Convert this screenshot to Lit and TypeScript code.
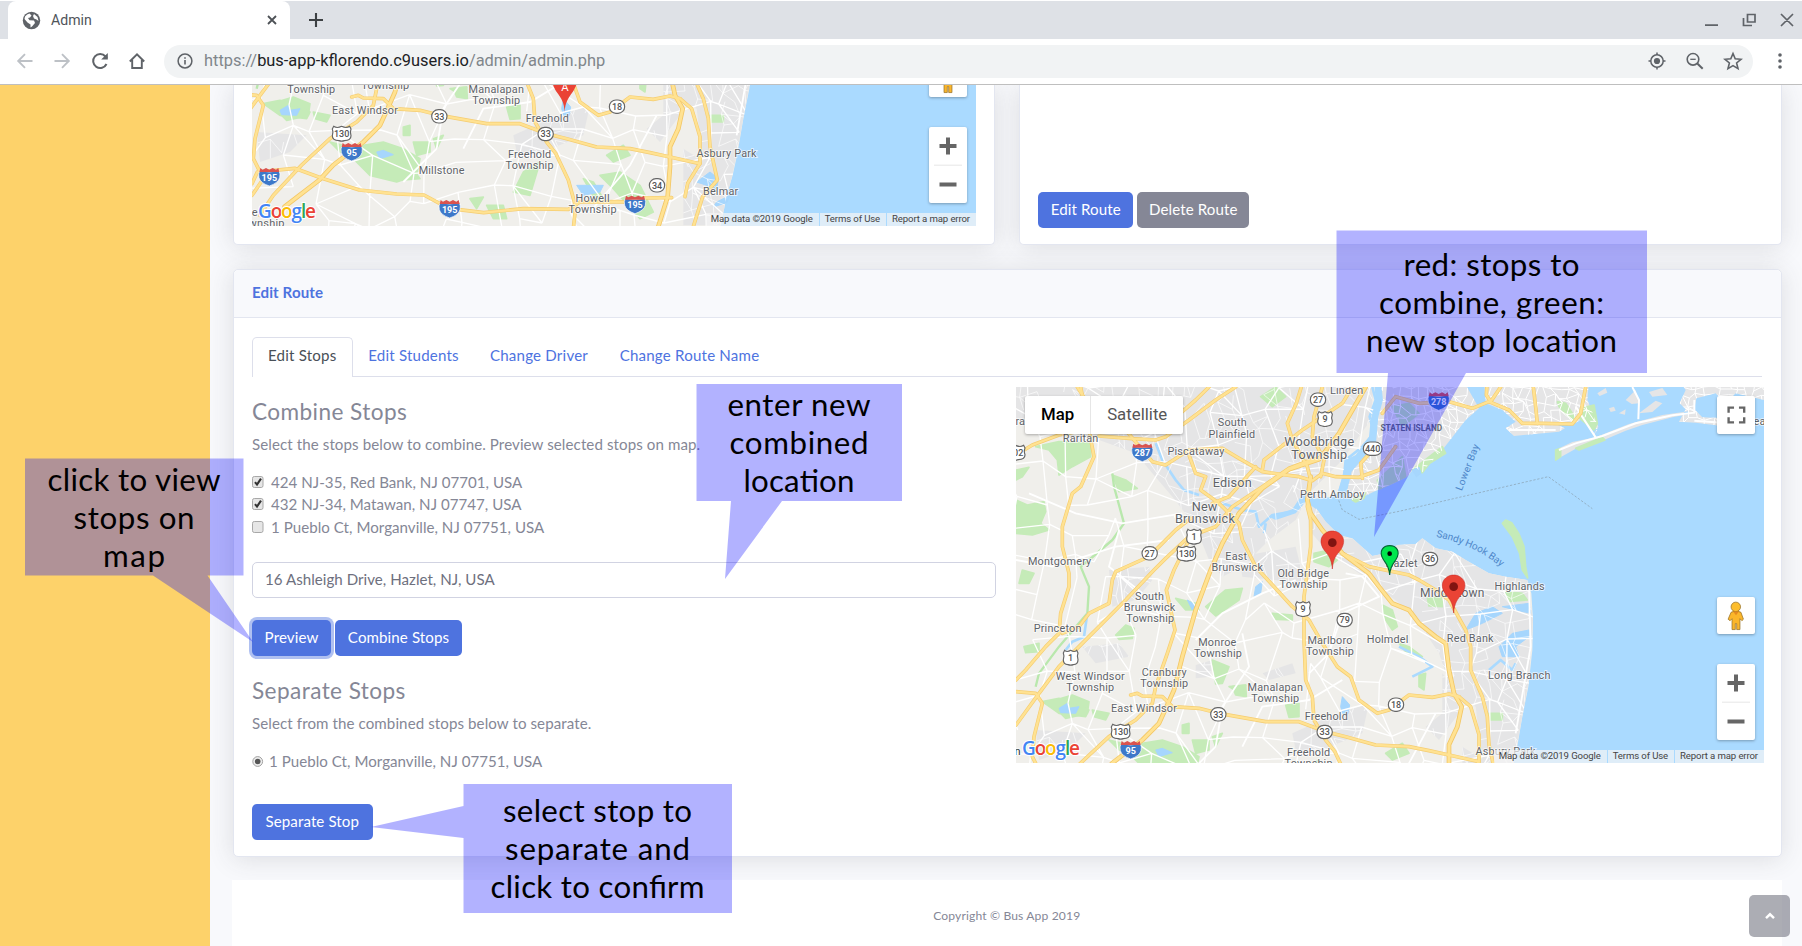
import { LitElement, html, svg, css } from "lit";
import { customElement, property } from "lit/decorators.js";

/* ---------- geography (units: one third of a pixel) ---------- */
const NJ =
  "M0 0H1095L1100 60L1085 120L1080 170L1040 225L1010 240L1000 290L985 340L960 352L905 358L925 390L950 425L975 450L1000 468L1030 475L1060 502L1090 528L1130 520L1165 495L1220 492L1240 475L1280 505L1330 515L1370 540L1440 580L1490 590L1555 600L1567 640L1572 720L1570 810L1558 920L1540 1010L1522 1115L1508 1180L1492 1234L1470 1340H0Z";
const STATEN =
  "M1115 0H1362L1410 85L1370 120L1300 210L1262 250L1240 277L1218 262L1195 290L1150 312L1110 328L1060 352L1030 360L1015 330L1028 275L1062 235L1100 200L1108 110L1122 60Z";
const BROOKLYN =
  "M1425 0L1430 70L1480 90L1520 125L1490 145L1515 168L1650 155L1668 145L1640 132L1700 128L1732 110L1765 150L1750 170L1762 150L1768 140L1735 60L1740 0Z";
const ROCKAWAY =
  "M1640 240L1640 210L1690 186L1760 172L1860 132L1960 105L2040 94L2040 102L1990 112L1900 135L1850 152L1790 178L1700 206Z";
const LONGBEACH = "M2010 0L2030 30L2012 70L2030 88L2010 125L2060 128L2140 138L2265 132V126L2180 116L2080 112L2056 88L2062 55L2120 40L2150 70L2180 40L2265 60V0Z";
const ISLANDS =
  "M1765 40L1790 24L1795 38L1772 48ZM1850 60L1880 30L1890 70L1868 72ZM1890 100L1940 62L1960 70L1930 96ZM1830 100L1850 88L1848 104ZM1920 36L1960 24L1975 45L1930 50ZM1800 85L1815 80L1820 92L1805 96Z";

const URBAN = [
  "M0 0H1095L1085 120L1000 240L900 340L860 420L780 480L700 560L640 590L600 540L560 440L490 350L430 280L380 220L270 180L200 100L0 120Z",
  "M895 360L1020 475L1160 495L1240 475L1340 520L1555 600L1572 720L1560 900L1520 1120L1480 1300H1380L1420 1150L1400 980L1330 940L1290 820L1210 700L1080 600L960 520L900 450Z",
  "M300 570L420 560L430 600L380 660L310 680Z",
  "M560 855L610 840L605 890L560 895Z",
  "M1300 880L1340 930L1350 1000L1290 1080L1250 1040L1300 1000Z",
  "M80 1050L230 1060L180 1110L90 1140Z",
  "M850 1060L960 1010L1080 970L1060 1060L940 1110L860 1110Z",
  "M220 800L330 790L360 830L260 850Z",
  "M690 530L860 500L890 620L800 600L700 590Z",
  "M760 880L850 850L860 880L780 900Z",
  "M1360 1100L1440 1150L1480 1330H1360Z",
];
const PARKS = [
  "M21 360L55 375L105 365L110 395L95 430L120 450L70 465L21 460Z",
  "M80 200L150 185L245 190L245 230L190 260L150 285L145 240L120 210Z",
  "M21 270L60 262L40 290L21 300Z",
  "M310 285L350 300L385 325L330 335Z",
  "M755 50L800 21L830 50L790 80Z",
  "M590 680L650 630L700 625L690 660L620 708Z",
  "M500 655L560 670L570 690L530 690Z",
  "M790 700L850 705L850 720L800 718Z",
  "M610 840L660 860L640 910L620 912Z",
  "M140 960L190 945L240 965L235 1000L170 1015L145 990Z",
  "M250 990L300 1000L290 1020L255 1010Z",
  "M320 765L350 735L375 745L370 775L330 778Z",
  "M670 920L710 915L712 950L680 945Z",
  "M830 975L870 970L870 1010L840 1012Z",
  "M370 1130L400 1090L460 1080L520 1100L570 1130L560 1180L500 1200L420 1180Z",
  "M550 1080L600 1080L600 1110L560 1120Z",
  "M610 1070L640 1060L620 1100Z",
  "M1120 675L1150 690L1165 740L1150 750L1130 720Z",
  "M1170 790L1200 800L1240 830L1220 830L1190 815Z",
  "M1230 885L1250 880L1245 930L1230 920Z",
  "M1130 1120L1180 1090L1200 1120L1150 1140Z",
  "M1030 360L1070 335L1065 355L1040 366Z",
  "M1255 655L1300 648L1300 680L1260 678Z",
  "M1490 635L1540 640L1555 660L1500 664Z",
  "M1210 270L1235 250L1300 200L1310 220L1262 250L1240 278Z",
  "M1715 85L1755 75L1765 130L1755 150L1712 115Z",
  "M1645 65L1670 70L1700 115L1690 122L1650 80Z",
  "M1480 430L1490 420L1508 428L1530 462L1545 500L1550 560L1556 594L1540 570L1532 520L1510 470Z",
  "M1640 240L1640 210L1655 205L1655 230ZM1700 205L1780 172L1788 180L1710 210Z",
  "M1105 300L1150 260L1180 230L1190 290L1110 328Z",
  "M1150 80L1200 70L1230 100L1180 140Z",
  "M1110 1180L1170 1170L1230 1210L1270 1290L1230 1310L1150 1220Z",
  "M420 1110L480 1130L540 1150L570 1190L500 1195L430 1150Z",
  "M880 1170L930 1140L900 1240L850 1230Z",
  "M1060 1190L1090 1200L1120 1250L1100 1260Z",
  "M720 1250L760 1245L740 1280Z",
  "M770 1270L820 1270L830 1310L790 1310Z",
  "M100 965L150 955L240 990L230 1010L150 1000Z",
  "M660 920L710 915L700 945Z",
  "M520 1035L540 1030L540 1060L520 1060Z",
  "M915 520L960 510L985 540L960 560L915 545Z",
  "M1440 1000L1480 1000L1480 1020L1445 1020Z",
  "M40 570L75 580L60 610L30 610Z",
  "M45 800L90 790L90 815L50 818Z",
  "M300 1080L340 1090L380 1120L330 1110Z",
];
const LAKES = [
  "M150 985L175 970L180 985L210 980L200 1000L155 998Z",
  "M440 1110L460 1105L490 1118L450 1130Z",
  "M740 620L760 605L755 640L735 650Z",
  "M535 660L560 675L550 690Z",
  "M1370 750L1400 700L1450 680L1480 700L1420 730Z",
  "M1470 800L1510 760L1560 750L1560 770L1520 800L1530 830L1480 830Z",
  "M1480 680L1560 670L1565 700L1520 690Z",
  "M1040 1210L1120 1210L1110 1230L1060 1240Z",
  "M1400 1200L1440 1170L1465 1190L1460 1220Z",
  "M1460 1260L1500 1240L1490 1262L1450 1275Z",
  "M1000 950L1022 975L1018 1000L1002 1004L995 980Z",
  "M1210 270L1230 262L1236 280L1222 290Z",
];
const RIVERS = [
  "M440 190L460 240L500 300L525 330L570 345",
  "M640 370L700 390L740 395L750 440L790 405L850 395L880 350L920 350",
  "M770 430L765 460",
  "M235 700L225 770L190 785L170 810",
  "M1090 21L1100 60L1082 110L1095 160L1060 200L1010 240L1005 290L990 340",
  "M1170 800L1230 830L1270 860L1210 890",
  "M1440 870L1475 840L1510 870L1520 850",
];
const YELLOW = [
  "M21 225L70 195L150 165L230 150M270 168L370 176L440 180L470 170L540 120L620 60L680 21",
  "M520 95L560 60L600 21",
  "M205 21L230 60L260 100L350 150L400 210L430 245L470 255L540 210L640 205L690 235L760 275L830 285L870 290L910 302L940 280L980 290L1050 292L1110 270L1160 200",
  "M215 21L240 150L255 230L215 320L190 340L160 440L160 500L180 580L180 620L155 700L150 760L110 800L50 870L21 900",
  "M160 760L210 740L240 700L300 670L310 600L320 575L420 530L500 450L545 415",
  "M21 1035L90 940L150 860L210 800L350 660L435 570L470 535L540 470L620 440L670 380L760 320L840 265L905 240L950 230",
  "M540 225L560 280L590 290L575 330L630 370L660 400L690 430L700 480L740 560L850 680L900 720L940 790L985 860L1025 890L1050 960L1105 1000L1140 990L1200 945L1270 952L1320 942L1350 950",
  "M905 290L895 380L905 420L905 500L885 650L885 780L890 900L910 950L915 1020L950 1080L977 1114L1015 1194L1037 1274L1030 1340",
  "M1000 520L1080 560L1200 585L1230 600L1280 630L1320 660L1370 750L1385 800L1385 870L1420 950L1435 1010L1440 1094L1462 1194L1418 1244L1388 1340",
  "M1350 950L1385 980L1410 1064L1410 1144L1373 1204L1365 1244",
  "M365 945L385 940L400 948L460 950L490 980L570 985L630 1000L770 1025L870 1025L950 1055L1010 1070L1100 1095L1200 1100L1260 1112L1320 1125L1410 1145",
  "M89 1300L130 1240L215 1149L300 1070L380 1020L430 970L440 920L475 820L498 750L472 630L495 570L545 470",
  "M21 935L80 940L100 970L75 1070L70 1130L100 1190L66 1240",
  "M66 1205L82 1170L194 1159L280 1190L388 1224L500 1236L582 1239L656 1279L761 1292L880 1280L1015 1282L1050 1260L1164 1259L1215 1262L1240 1248L1325 1247",
  "M877 21L862 70L835 130L850 180L895 260L905 300",
  "M940 21L915 110L910 170L945 240L935 290",
  "M760 270L765 240L880 150L1000 70L1030 21",
  "M1060 295L1055 250L1100 200",
  "M610 370L660 350L740 260",
  "M1120 100L1160 50L1230 70L1320 65L1390 85L1440 65L1500 90L1540 130L1600 130L1690 132L1715 100L1730 21",
  "M1435 0L1432 45L1445 65L1475 21M1573 21L1580 80L1585 130",
];
const TURNPIKE = [
  "M164 1274L268 1194L310 1149L400 1080L450 1030L475 975L495 930L520 830L560 690L605 570L640 490L690 400L760 325L840 268L930 238L990 160L1070 21",
  "M905 290L895 360L905 400L940 450L1000 520L1040 550L1080 580L1110 620L1150 670L1200 690L1230 730L1280 770L1310 790L1320 870L1335 940L1358 980L1345 1040L1320 1094L1320 1154L1313 1244L1283 1340",
];
const WHITE = [
  "M21 540L130 560L320 500L480 480",
  "M60 340L200 400L340 430L520 400",
  "M330 450L300 560L400 640",
  "M1010 580L1060 590L1110 650L1000 700L960 820L900 880",
  "M700 760L720 860L640 980L620 1100L520 1200",
  "M860 600L760 640L640 700L560 780",
  "M1000 900L900 960L760 980L700 1100",
  "M1560 620L1565 800L1520 1060",
  "M1280 1000L1200 1150L1080 1290",
];

function rnd(a: number, b: number, c = 0): number {
  const v = Math.sin(a * 127.1 + b * 311.7 + c * 74.7) * 43758.5453;
  return v - Math.floor(v);
}
/* Local street mesh: a jittered lattice with some of its edges left out. */
function mesh(step: number, keep: number, seed: number, w = 2280, h = 1350): string {
  const pt = (i: number, j: number) =>
    `${Math.round((i + (rnd(i, j, seed) - 0.5) * 0.8) * step)} ${Math.round((j + (rnd(i, j, seed + 1) - 0.5) * 0.8) * step)}`;
  let d = "";
  for (let i = 0; i < w / step; i++)
    for (let j = 0; j < h / step; j++) {
      if (rnd(i, j, seed + 2) < keep) d += `M${pt(i, j)}L${pt(i + 1, j)}`;
      if (rnd(i, j, seed + 3) < keep) d += `M${pt(i, j)}L${pt(i, j + 1)}`;
      if (rnd(i, j, seed + 4) < keep * 0.22) d += `M${pt(i, j)}L${pt(i + 1, j + 1)}`;
    }
  return d;
}
const COARSE = mesh(88, 0.74, 3);
const FINE = mesh(40, 0.56, 9);
const STREETS = mesh(24, 0.85, 17);

type Label = [string, number, number, number?];
const LABELS: Label[] = [
  ["Linden", 1013, 41], ["South", 670, 139], ["Plainfield", 669, 173], ["Raritan", 215, 185],
  ["Piscataway", 561, 224], ["Woodbridge", 931, 199, 38], ["Township", 931, 237, 38],
  ["Edison", 670, 321, 38], ["Perth Amboy", 970, 353], ["New", 587, 392, 38],
  ["Brunswick", 588, 430, 38], ["Montgomery", 152, 554], ["East", 682, 540],
  ["Brunswick", 685, 574], ["Old Bridge", 883, 591], ["Township", 884, 625],
  ["South", 422, 659], ["Brunswick", 422, 693], ["Township", 424, 727],
  ["Princeton", 146, 757], ["Monroe", 625, 798], ["Township", 627, 831],
  ["Marlboro", 963, 792], ["Township", 963, 825], ["Holmdel", 1136, 790],
  ["West Windsor", 244, 899], ["Township", 244, 933], ["Cranbury", 466, 888],
  ["Township", 466, 922], ["Manalapan", 799, 933], ["Township", 799, 967],
  ["East Windsor", 405, 997], ["Freehold", 952, 1020], ["Freehold", 899, 1127],
  ["Township", 899, 1161], ["Hazlet", 1178, 561], ["Middletown", 1330, 651, 36],
  ["Highlands", 1532, 630], ["Red Bank", 1384, 786], ["Long Branch", 1531, 898],
  ["Asbury Park", 1490, 1126], ["Millstone", 635, 1177], ["Howell", 1088, 1259],
  ["Township", 1088, 1293], ["Belmar", 1472, 1239], ["ra", 34, 136],
];

function shield(kind: string, n: string, x: number, y: number) {
  if (kind === "i")
    return svg`<g transform="translate(${x} ${y})">
      <path d="M-29 -17Q0 -9 29 -17Q34 -8 31 4Q27 20 0 29Q-27 20 -31 4Q-34 -8 -29 -17Z" fill="#3d78c9" stroke="#fff" stroke-width="2"/>
      <path d="M-27 -25L-20 -20L-10 -25L0 -20L10 -25L20 -20L27 -25L30 -13H-30Z" fill="#d9534f"/>
      <text class="ish" y="13">${n}</text></g>`;
  const w = n.length > 2 ? 28 : n.length > 1 ? 23 : 22;
  return kind === "u"
    ? svg`<g transform="translate(${x} ${y})">
      <path d="M${-w + 4} -22Q${-w / 2} -15 0 -22Q${w / 2} -15 ${w - 4} -22L${w} -14Q${w - 4} -4 ${w} 6Q${w} 20 8 21Q0 24 -8 21Q${-w} 20 ${-w} 6Q${-w + 4} -4 ${-w} -14Z" fill="#fff" stroke="#666" stroke-width="3.5"/>
      <text class="sh" y="10">${n}</text></g>`
    : svg`<g transform="translate(${x} ${y})">
      <rect x=${-w} y="-20" width=${2 * w} height="40" rx="20" fill="#fff" stroke="#666" stroke-width="3.5"/>
      <text class="sh" y="10">${n}</text></g>`;
}
const SHIELDS: [string, string, number, number][] = [
  ["i", "287", 400, 216], ["i", "278", 1289, 62], ["s", "27", 927, 59], ["u", "9", 948, 117],
  ["s", "440", 1091, 206], ["u", "1", 555, 470], ["u", "130", 532, 521], ["s", "27", 422, 520],
  ["s", "36", 1263, 537], ["u", "9", 882, 687], ["s", "79", 1007, 720], ["u", "1", 185, 833],
  ["s", "33", 628, 1003], ["u", "130", 335, 1055], ["s", "18", 1161, 974], ["s", "33", 947, 1056],
  ["i", "95", 365, 1108], ["u", "202", 20, 218], ["i", "195", 118, 1183], ["i", "195", 659, 1279],
  ["i", "195", 1215, 1266], ["s", "34", 1281, 1210],
];

@customElement("street-map")
export class StreetMap extends LitElement {
  @property() view = "0 0 100 100";
  @property({ type: Boolean }) full = false;

  static styles = css`
    :host { display: block; position: relative; overflow: hidden; font-family: Roboto, sans-serif; letter-spacing: 0; }
    .canvas { display: block; width: 100%; height: 100%; }
    .lb { font: 400 33px Roboto, sans-serif; fill: #5f6368; stroke: #fff; stroke-width: 5; stroke-opacity: .75; paint-order: stroke; text-anchor: middle; letter-spacing: .6px; }
    .sh { font: 500 27px Roboto, sans-serif; fill: #555; text-anchor: middle; }
    .ish { font: 700 27px Roboto, sans-serif; fill: #fff; text-anchor: middle; }
    .water { font: 400 30px Roboto, sans-serif; fill: #4e86c9; text-anchor: middle; letter-spacing: 1px; }
    .boro { font: 700 25px Roboto, sans-serif; fill: #666d75; text-anchor: middle; }
    .pinA { font: 400 30px Roboto, sans-serif; fill: #fff; text-anchor: middle; }
    .logo { position: absolute; left: 6px; bottom: 1px; }
    .g { font: 600 19px/18px "Open Sans", sans-serif; paint-order: stroke; stroke: #fff; stroke-width: 2; }
    .attr { position: absolute; right: 0; bottom: 0; height: 13px; display: flex; font-size: 9.6px; line-height: 12px; color: #444; letter-spacing: -.12px; }
    .attr span { background: rgba(245,245,245,.7); padding: 0 6px 0 5px; margin-left: 1px; white-space: nowrap; }
    .panel { position: absolute; background: #fff; border-radius: 2px; box-shadow: 0 1px 3px rgba(0,0,0,.3); right: 9.5px; width: 37.5px; display: flex; flex-direction: column; align-items: center; }
    .zoom { bottom: 23px; height: 76px; }
    .peg { bottom: 129px; height: 37.5px; }
    .fs { top: 9px; height: 37.5px; }
    .types { position: absolute; left: 9px; top: 9px; height: 38px; display: flex; background: #fff; border-radius: 2px; box-shadow: 0 1px 3px rgba(0,0,0,.3); font-size: 16.8px; line-height: 37px; color: #565656; }
    .types span { padding: 0 16px; }
    .types .on { color: #000; font-weight: 500; border-right: 1px solid #e6e6e6; }
  `;

  render() {
    const [vx, vy, vw, vh] = this.view.split(" ").map(Number);
    const visible = (x: number, y: number, m: number) =>
      x > vx - m && x < vx + vw + m && y > vy - 3 && y < vy + vh + m;
    const pin = (x: number, y: number) => svg`<g transform="translate(${x} ${y})">
      <path d="M0 0C-2 -30 -12 -42 -24 -56C-48 -90 -24 -114 0 -114C24 -114 48 -90 24 -56C12 -42 2 -30 0 0Z" fill="#ea4335" stroke="#c5221f" stroke-width="1.5"/>
      <circle cy="-79" r="13" fill="#811411"/></g>`;
    return html`
      <svg class="canvas" viewBox=${this.view} preserveAspectRatio="none">
        <defs>
          <clipPath id="land"><path d=${NJ} /></clipPath>
          <clipPath id="urban"><path d=${URBAN.join("")} /></clipPath>
          <clipPath id="city"><path d=${STATEN + BROOKLYN + LONGBEACH} /></clipPath>
        </defs>
        <rect x="0" y="0" width="2400" height="1400" fill="#aadaff" />
        <path d=${NJ} fill="#f0efeb" />
        <g clip-path="url(#land)">
          ${URBAN.map((d) => svg`<path d=${d} fill="#e5e5e6"/>`)}
        </g>
        <path d=${STATEN + BROOKLYN + ROCKAWAY + LONGBEACH + ISLANDS} fill="#e5e5e6" />
        ${PARKS.map((d) => svg`<path d=${d} fill="#c5ebb8" stroke="#c5ebb8" stroke-width="5" stroke-linejoin="round"/>`)}
        <path d="M310 280L315 320L345 430L310 480L240 540L215 560L240 620L235 700L150 800L90 880L80 920" fill="none" stroke="#b9e8ad" stroke-width="7" stroke-linejoin="round" />
        ${RIVERS.map((d) => svg`<path d=${d} fill="none" stroke="#aadaff" stroke-width="8" stroke-linejoin="round"/>`)}
        <path d="M780 410L850 388L880 350L910 345L925 390L890 365L860 400L800 420Z" fill="#aadaff" />
        ${LAKES.map((d) => svg`<path d=${d} fill="#a6d6fd" stroke="#a6d6fd" stroke-width="3"/>`)}
        <g clip-path="url(#land)" fill="none" stroke="#fff">
          <path d=${COARSE} stroke-width="4" />
          ${WHITE.map((d) => svg`<path d=${d} stroke-width="5.5"/>`)}
          <g clip-path="url(#urban)"><path d=${FINE} stroke-width="2.3" stroke-opacity=".85" /></g>
        </g>
        <g clip-path="url(#city)"><path d=${STREETS} fill="none" stroke="#fff" stroke-width="3" /></g>
        <path d="M1650 210L1700 190L1780 168L1880 130L1990 106L2056 98V60M2056 122L2140 128H2265M1700 80L1760 172M1870 21L1890 60L1888 118M1500 150H1640" fill="none" stroke="#fff" stroke-width="6" />
        <g fill="none" stroke-linejoin="round" stroke-linecap="round">
          ${YELLOW.map((d) => svg`<path d=${d} stroke="#f5cd72" stroke-width="11"/>`)}
          ${TURNPIKE.map((d) => svg`<path d=${d} stroke="#f3c766" stroke-width="14"/>`)}
          ${YELLOW.map((d) => svg`<path d=${d} stroke="#ffe292" stroke-width="7"/>`)}
          ${TURNPIKE.map((d) => svg`<path d=${d} stroke="#ffe292" stroke-width="9"/>`)}
        </g>
        <path d="M985 350L1000 390L1050 418L1170 394L1618 290L1750 386" fill="none" stroke="#8fa9bd" stroke-width="2.5" stroke-dasharray="7 5" />
        ${SHIELDS.filter(([, , x, y]) => visible(x, y, 20)).map(([k, n, x, y]) => shield(k, n, x, y))}
        ${LABELS.filter(([, x, y]) => visible(x, y, 14)).map(([t, x, y, s]) => svg`<text class="lb" x=${x} y=${y} style="font-size:${s ?? 32.5}px">${t}</text>`)}
        ${this.full
          ? svg`<text class="lb" x="2252" y="134">ea</text>
            <text class="lb" x="26" y="1126" style="fill:#333">n</text>
            <text class="boro" x="1207" y="153">STATEN ISLAND</text>
            <text class="water" transform="translate(1385 265) rotate(-69)">Lower Bay</text>
            <path id="hook" d="M1281 470Q1400 495 1482 566" fill="none"/>
            <text class="water" style="text-anchor:start;letter-spacing:0"><textPath href="#hook">Sandy Hook Bay</textPath></text>
            ${pin(970, 567)}${pin(1334, 699)}
            <path d="M1142 585C1141 560 1131 550 1124 540C1106 512 1124 497 1142 497C1160 497 1178 512 1160 540C1153 550 1143 560 1142 585Z" fill="#00e64d" stroke="#063" stroke-width="3.5"/>
            <circle cx="1142" cy="521" r="7" fill="#000"/>`
          : svg`<path d="M1004 990C1002 960 994 950 980 930C950 885 975 860 1004 860C1033 860 1058 885 1028 930C1014 950 1006 960 1004 990Z" fill="#ea4335"/>
            <text class="pinA" x="1005" y="926" style="font-size:34px">A</text>
            <text class="lb" x="74" y="1303">e</text><text class="lb" x="110" y="1336">wnship</text>`}
      </svg>
      <svg class="logo" width="62" height="24" viewBox="0 0 62 24">
        <text class="g" x="0" y="17" textLength="58"><tspan fill="#4285f4">G</tspan><tspan fill="#ea4335">o</tspan><tspan fill="#fbbc05">o</tspan><tspan fill="#4285f4">g</tspan><tspan fill="#34a853">l</tspan><tspan fill="#ea4335">e</tspan></text>
      </svg>
      <div class="attr"><span>Map data ©2019 Google</span><span>Terms of Use</span><span>Report a map error</span></div>
      ${this.full
        ? html`<div class="types"><span class="on">Map</span><span>Satellite</span></div>
            <div class="panel fs">
              <svg width="38" height="38" viewBox="0 0 38 38" fill="none" stroke="#666" stroke-width="2.4"><path d="M11.5 17V11.8H17M22 11.8H27.3V17M27.3 21.5V26.7H22M17 26.7H11.5V21.5" /></svg>
            </div>`
        : ""}
      <div class="panel peg">
        <svg width="38" height="38" viewBox="0 0 38 38"><path d="M14 15.5Q19 12.5 24 15.5L26.5 22.5L25 24L23 22V33H19.7V27H18.3V33H15V22L13 24L11 22.5Z" fill="#fbb62a" stroke="#9c762b" stroke-width=".8" /><circle cx="18.8" cy="10" r="4.8" fill="#fdbd2c" stroke="#9c762b" stroke-width=".8" /><path d="M16 14.8H22L19 18.6Z" fill="#e58a1f" /></svg>
      </div>
      <div class="panel zoom">
        <svg width="38" height="76" viewBox="0 0 38 76"><path d="M10.5 19H27.5M19 10.5V27.5M10.5 57.5H27.5" stroke="#666" stroke-width="4" /><path d="M5 38.2H33" stroke="#e6e6e6" /></svg>
      </div>`;
  }
}

@customElement("browser-bar")
export class BrowserBar extends LitElement {
  static styles = css`
    :host { display: block; height: 85px; flex: none; box-sizing: border-box; border-bottom: 1.5px solid #bfbfbf; background: #fff; font-family: Roboto, sans-serif; color: #5f6368; letter-spacing: 0; }
    .strip { height: 38px; margin-top: 1px; background: #dee1e6; display: flex; align-items: center; }
    .tab { height: 38px; width: 282px; margin-left: 8px; background: #fff; border-radius: 8px 8px 0 0; display: flex; align-items: center; box-sizing: border-box; padding-left: 14px; }
    .tab b { font-weight: 400; font-size: 14.1px; color: #50545a; margin-left: 10px; flex: 1; }
    .tab .x { margin-right: 11px; }
    .plus { margin-left: 16px; }
    .win { margin-left: auto; margin-right: 7px; }
    .bar { height: 44px; display: flex; align-items: center; }
    .nav { display: flex; padding-left: 13px; width: 151px; }
    .nav svg { margin-right: 13.3px; }
    .omni { width: 1589px; height: 33px; border-radius: 17px; background: #f1f3f4; display: flex; align-items: center; box-sizing: border-box; padding: 0 10px 0 12px; }
    .url { flex: 1; font-size: 16.4px; margin-left: 10px; color: #80868b; white-space: pre; letter-spacing: 0; }
    .url b { font-weight: 400; color: #202124; }
    .acts { display: flex; gap: 14px; margin-right: -2px; }
    .dots { margin-left: 15px; }
    svg { display: block; flex: none; }
  `;
  render() {
    return html`
      <div class="strip">
        <div class="tab">
          <svg width="19" height="19" viewBox="0 0 19 19"><circle cx="9.5" cy="9.5" r="8.7" fill="#5f6368" /><path d="M3 5.5Q5 3 7.5 2.6L9.5 4.5L8 6.5L6 7L7.5 9.2L12 9.5L13 12L10 15.5L8.5 16.5V13.5L5.5 11.5L2.5 8ZM12 3L15.5 6L16.5 10L14.5 8.5L12 7.5L11 5Z" fill="#fff" /></svg>
          <b>Admin</b>
          <svg class="x" width="14" height="14" viewBox="0 0 14 14"><path d="M3 3L11 11M11 3L3 11" stroke="#4d5156" stroke-width="1.8" /></svg>
        </div>
        <svg class="plus" width="20" height="20" viewBox="0 0 20 20"><path d="M10 3V17M3 10H17" stroke="#3c4043" stroke-width="2.1" /></svg>
        <svg class="win" width="100" height="26" viewBox="1695 8 100 26" fill="none" stroke="#5f6368" stroke-width="1.7"><path d="M1705 26.2H1718M1743.5 19V26.5H1752M1747.5 15.5H1755V23H1747.5ZM1781 15L1793 27M1793 15L1781 27" /></svg>
      </div>
      <div class="bar">
        <div class="nav">
          <svg width="24" height="24" viewBox="0 0 24 24" fill="none" stroke="#bdc1c6" stroke-width="1.9"><path d="M19.5 12H5.5M12 5.2L5.2 12L12 18.8" /></svg>
          <svg width="24" height="24" viewBox="0 0 24 24" fill="none" stroke="#bdc1c6" stroke-width="1.9"><path d="M4.5 12H18.5M12 5.2L18.8 12L12 18.8" /></svg>
          <svg width="24" height="24" viewBox="0 0 24 24" fill="none" stroke="#5f6368" stroke-width="2"><path d="M18.5 15A7 7 0 1 1 17.5 7.5L19 9" /><path d="M19.8 4V10.6H13.2Z" fill="#5f6368" stroke="none" /></svg>
          <svg width="24" height="24" viewBox="0 0 24 24" fill="none" stroke="#5f6368" stroke-width="1.9"><path d="M4.8 12.5L12 5.3L19.2 12.5M7.2 11V19H16.8V11" /></svg>
        </div>
        <div class="omni">
          <svg width="18" height="18" viewBox="0 0 18 18"><circle cx="9" cy="9" r="6.9" fill="none" stroke="#5f6368" stroke-width="1.5" /><path d="M9 8V12.6M9 5.2V6.8" stroke="#5f6368" stroke-width="1.6" /></svg>
          <div class="url">https://<b>bus-app-kflorendo.c9users.io</b>/admin/admin.php</div>
          <div class="acts">
            <svg width="24" height="24" viewBox="0 0 24 24" fill="none" stroke="#5f6368" stroke-width="1.5"><circle cx="12" cy="12" r="6.2" /><circle cx="12" cy="12" r="3.1" fill="#5f6368" stroke="none" /><path d="M12 3.5V6M12 18V20.5M3.5 12H6M18 12H20.5" /></svg>
            <svg width="24" height="24" viewBox="0 0 24 24" fill="none" stroke="#5f6368" stroke-width="1.6"><circle cx="10" cy="10.3" r="5.8" /><path d="M14.3 14.5L19.7 19.8" stroke-width="2" /><path d="M7.3 10.3H12.7" stroke-width="1.3" /></svg>
            <svg width="24" height="24" viewBox="0 0 24 24" fill="none" stroke="#5f6368" stroke-width="1.6"><path d="M12 4.5L14.2 9.8L20 10.3L15.6 14L17 19.6L12 16.6L7 19.6L8.4 14L4 10.3L9.8 9.8Z" /></svg>
          </div>
        </div>
        <svg class="dots" width="24" height="24" viewBox="0 0 24 24" fill="#5f6368"><circle cx="12" cy="6" r="1.8" /><circle cx="12" cy="12" r="1.8" /><circle cx="12" cy="18" r="1.8" /></svg>
      </div>`;
  }
}

interface Callout { shape: string; x: number; lines: [string, number, number][]; }
const CALLOUTS: Callout[] = [
  { shape: "M25 458.5H243.5V575.5H207.5L253 642L153 575.5H25Z", x: 134,
    lines: [["click to view", 491, 173], ["stops on", 529, 121], ["map", 567, 62]] },
  { shape: "M696.5 384H902V501H782L725 579L731 501H696.5Z", x: 799,
    lines: [["enter new", 416, 143], ["combined", 454, 139], ["location", 492, 111]] },
  { shape: "M1336.5 230.5H1647V373H1466L1374 537L1388 373H1336.5Z", x: 1491.5,
    lines: [["red: stops to", 276, 176], ["combine, green:", 314, 225], ["new stop location", 352, 251]] },
  { shape: "M463.5 784H732V913H463.5V838L371 827L463.5 806Z", x: 597.5,
    lines: [["select stop to", 822, 189], ["separate and", 860, 185], ["click to confirm", 898, 214]] },
];

@customElement("app-root")
export class AppRoot extends LitElement {
  static styles = css`
    :host { display: flex; flex-direction: column; width: 1802px; height: 946px; overflow: hidden; position: relative; background: #f8f9fc; font-family: Lato, sans-serif; font-size: 15.1px; line-height: 22.6px; color: #858796; letter-spacing: .03px; }
    .page { flex: 1; min-height: 0; display: flex; }
    .side { width: 209.5px; background: #fdd26a; flex: none; }
    .main { flex: 1; min-width: 0; padding: 0 20.5px 0 23px; overflow: hidden; }
    .card { background: #fff; border: 1px solid #e3e6f0; border-radius: 5px; box-shadow: 0 2px 26px rgba(58,59,69,.15); box-sizing: border-box; }
    .row { display: flex; gap: 24.5px; height: 159.5px; margin-bottom: 24px; }
    .row .card { flex: 1; border-top: 0; border-radius: 0 0 5px 5px; display: flex; align-items: flex-start; }
    .map1 { width: 724px; height: 141px; margin-left: 18.5px; }
    .acts { display: flex; gap: 4px; margin: 107px 0 0 18px; }
    .btn { height: 36px; box-sizing: border-box; border-radius: 5px; background: #4e73df; color: #fff; display: flex; align-items: center; justify-content: center; white-space: nowrap; padding-bottom: 1.5px; letter-spacing: .1px; }
    .gray { background: #858796; }
    .edit { height: 588.5px; display: flex; flex-direction: column; margin-bottom: 23px; }
    .head { height: 47px; border-bottom: 1px solid #e3e6f0; background: #f8f9fc; border-radius: 5px 5px 0 0; padding-left: 18.5px; font-weight: 700; color: #4e73df; line-height: 44px; letter-spacing: .1px; }
    .tabs { display: flex; margin: 19.5px 18.5px 0; height: 40px; border-bottom: 1px solid #dddfeb; color: #4e73df; box-sizing: border-box; line-height: 37px; letter-spacing: .2px; }
    .tabs span { text-align: center; box-sizing: border-box; white-space: nowrap; }
    .tabs .on { border: 1px solid #dddfeb; border-bottom: 0; background: #fff; height: 40px; line-height: 35px; border-radius: 5px 5px 0 0; color: #495057; }
    .cols { display: flex; }
    .left { width: 743.5px; margin-left: 18.5px; display: flex; flex-direction: column; align-items: flex-start; }
    .map2 { width: 748px; height: 376px; margin: 10px 0 0 20.5px; }
    h4 { margin: 20.5px 0 0; font-weight: 400; font-size: 22.6px; line-height: 27px; letter-spacing: .42px; }
    p { margin: 8px 0 0; white-space: nowrap; line-height: 22px; letter-spacing: .09px; }
    .list { margin-top: 16px; }
    .opt { display: flex; align-items: center; height: 22.6px; white-space: nowrap; }
    .opt svg { margin-right: 7px; display: block; }
    .field { width: 743.5px; height: 36px; box-sizing: border-box; border: 1px solid #d1d3e2; border-radius: 5px; padding-left: 12px; line-height: 33px; margin-top: 23.5px; color: #6e707e; }
    .pair { display: flex; gap: 4px; margin: 22px 0 1px; }
    .focus { box-shadow: 0 0 0 3px rgba(78,115,223,.45); }
    .foot { background: #fff; height: 66px; margin: 0 -.5px 0 -1px; text-align: center; font-size: 12.1px; line-height: 72px; letter-spacing: .14px; }
    .up { position: absolute; left: 1749px; top: 895px; width: 41px; height: 42px; border-radius: 5px; background: rgba(90,92,105,.5); display: flex; align-items: center; justify-content: center; }
    .notes { position: absolute; inset: 0; }
    .note { font: 400 31.3px Lato, sans-serif; fill: #000; text-anchor: middle; letter-spacing: 0; }
  `;

  private box(on: boolean) {
    return html`<svg width="12" height="12" viewBox="0 0 12 12"><rect x=".5" y=".5" width="10.5" height="11" rx="1.8" fill="#e6e6e6" stroke="#a8a8a8" />${on ? svg`<path d="M3 6.2L5 8.6L9 2.6" fill="none" stroke="#333" stroke-width="2.1"/>` : ""}</svg>`;
  }

  render() {
    const stops: [string, boolean][] = [
      ["424 NJ-35, Red Bank, NJ 07701, USA", true],
      ["432 NJ-34, Matawan, NJ 07747, USA", true],
      ["1 Pueblo Ct, Morganville, NJ 07751, USA", false],
    ];
    const tabs: [string, number][] = [["Edit Stops", 100.5], ["Edit Students", 122], ["Change Driver", 129], ["Change Route Name", 172]];
    return html`
      <browser-bar></browser-bar>
      <div class="page">
        <div class="side"></div>
        <div class="main">
          <div class="row">
            <div class="card"><street-map class="map1" view="66 909 2172 423"></street-map></div>
            <div class="card"><div class="acts"><div class="btn" style="width:95px">Edit Route</div><div class="btn gray" style="width:112px">Delete Route</div></div></div>
          </div>
          <div class="card edit">
            <div class="head">Edit Route</div>
            <div class="tabs">${tabs.map(([t, w], i) => html`<span class=${i ? "" : "on"} style="width:${w}px">${t}</span>`)}</div>
            <div class="cols">
              <div class="left">
                <h4>Combine Stops</h4>
                <p>Select the stops below to combine. Preview selected stops on map.</p>
                <div class="list">${stops.map(([t, on]) => html`<div class="opt">${this.box(on)}${t}</div>`)}</div>
                <div class="field">16 Ashleigh Drive, Hazlet, NJ, USA</div>
                <div class="pair"><div class="btn focus" style="width:79px">Preview</div><div class="btn" style="width:127px">Combine Stops</div></div>
                <h4>Separate Stops</h4>
                <p>Select from the combined stops below to separate.</p>
                <div class="list opt"><svg style="margin-right:5px" width="12" height="12" viewBox="0 0 12 12"><circle cx="5.7" cy="5.5" r="4.9" fill="#eee" stroke="#a0a0a0" /><circle cx="5.7" cy="5.5" r="2.8" fill="#555" /></svg>1 Pueblo Ct, Morganville, NJ 07751, USA</div>
                <div class="btn" style="width:120.5px;margin-top:31px">Separate Stop</div>
              </div>
              <street-map class="map2" full view="21 21 2244 1128"></street-map>
            </div>
          </div>
          <div class="foot">Copyright © Bus App 2019</div>
        </div>
      </div>
      <div class="up"><svg width="12" height="8" viewBox="0 0 12 8"><path d="M2 6.2L6 2.3L10 6.2" fill="none" stroke="#fff" stroke-width="2.4" /></svg></div>
      <svg class="notes" width="1802" height="946" viewBox="0 0 1802 946">
        ${CALLOUTS.map((c) => svg`<path d=${c.shape} fill="#00f" fill-opacity=".3"/>
          ${c.lines.map(([t, y, w]) => svg`<text class="note" x=${c.x} y=${y} textLength=${w}>${t}</text>`)}`)}
      </svg>`;
  }
}
